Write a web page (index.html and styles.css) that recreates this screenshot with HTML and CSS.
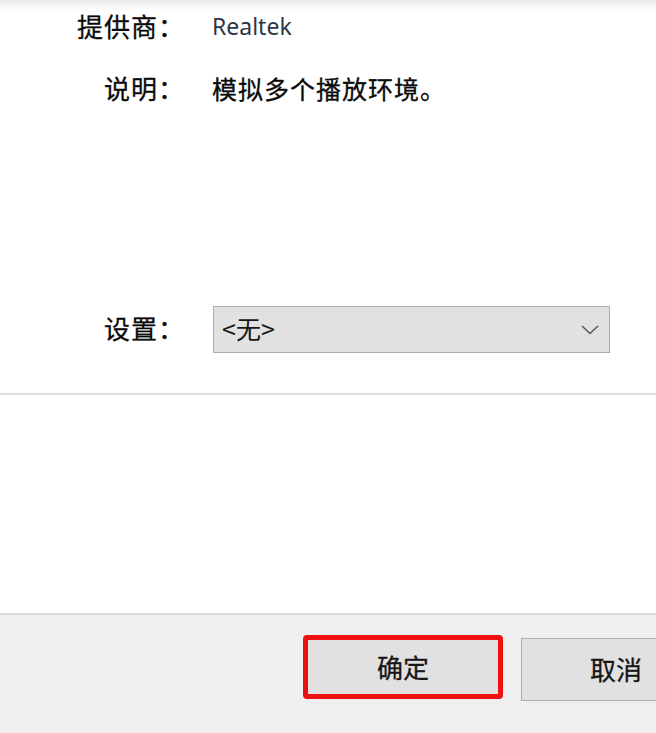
FILE: index.html
```html
<!DOCTYPE html>
<html lang="zh-CN">
<head>
<meta charset="utf-8">
<title>属性</title>
<link rel="stylesheet" href="styles.css">
</head>
<body>
<div class="page">
  <section class="info">
    <div class="row row-provider">
      <span class="label">提供商：</span>
      <span class="value latin">Realtek</span>
    </div>
    <div class="row row-desc">
      <span class="label">说明：</span>
      <span class="value">模拟多个播放环境。</span>
    </div>
    <div class="row row-settings">
      <span class="label">设置：</span>
      <div class="select">
        <span class="select-text">&lt;无&gt;</span>
        <svg class="chevron" width="18" height="10" viewBox="0 0 18 10"><polyline points="1,1 9,8.5 17,1" fill="none" stroke="#5a5a5a" stroke-width="1.6"/></svg>
      </div>
    </div>
  </section>
  <div class="separator"></div>
  <div class="blank"></div>
  <footer class="footer">
    <button class="btn btn-ok">确定</button>
    <button class="btn btn-cancel">取消</button>
  </footer>
  <div class="taskbar-line"></div>
</div>
</body>
</html>
```
FILE: styles.css
```css
html, body {
  margin: 0;
  padding: 0;
  background: #ffffff;
}
.page {
  width: 656px;
  height: 733px;
  overflow: hidden;
  display: flex;
  flex-direction: column;
  font-family: "Noto Sans CJK SC", "Noto Sans", sans-serif;
  color: #0a0a0a;
  background: linear-gradient(#e9e9e9 0px, #f8f8f8 6px, #ffffff 12px);
}
.info {
  display: flex;
  flex-direction: column;
  padding-top: 6px;
}
.row {
  display: flex;
  align-items: center;
  gap: 27px;
}
.label {
  width: 185px;
  text-align: right;
  font-size: 26px;
  line-height: 40px;
  flex: none;
  letter-spacing: 1px;
  -webkit-text-stroke: 0.3px #0a0a0a;
}
.value {
  font-size: 25px;
  line-height: 40px;
  letter-spacing: 1px;
  -webkit-text-stroke: 0.3px #0a0a0a;
}
.latin {
  font-family: "Noto Sans", sans-serif;
  font-size: 23px;
  letter-spacing: 0;
  color: #2e3646;
  -webkit-text-stroke: 0;
}
.row-desc {
  margin-top: 22px;
}
.row-settings {
  margin-top: 198px;
  gap: 28px;
}
.row-settings .label {
  padding-bottom: 4px;
}
.select {
  width: 397px;
  height: 47px;
  box-sizing: border-box;
  border: 1px solid #adadad;
  background: #e1e1e1;
  display: flex;
  align-items: center;
  justify-content: space-between;
  padding: 0 10px 4px 8px;
}
.select-text {
  font-size: 25px;
  line-height: 40px;
  color: #161616;
}
.chevron {
  display: block;
  margin-top: 4px;
}
.separator {
  margin-top: 40px;
  height: 2px;
  background: #dedede;
  flex: none;
}
.blank {
  height: 218px;
  flex: none;
}
.footer {
  height: 109px;
  flex: none;
  border-top: 2px solid #dcdcdc;
  background: #efefef;
  display: flex;
  align-items: flex-start;
  padding-top: 20px;
  box-sizing: content-box;
}
.btn {
  font-family: "Noto Sans CJK SC", sans-serif;
  font-size: 26px;
  line-height: 1;
  color: #161616;
  background: #e1e1e1;
  box-sizing: border-box;
  padding: 0;
  flex: none;
  -webkit-text-stroke: 0.3px #161616;
}
.btn-ok {
  margin-left: 303px;
  width: 200px;
  height: 64px;
  border: 5px solid #ee1111;
  border-radius: 4px;
  padding-bottom: 1px;
}
.btn-cancel {
  margin-left: 18px;
  margin-top: 3px;
  width: 160px;
  height: 63px;
  border: 1px solid #adadad;
  text-align: left;
  padding-left: 68px;
  padding-bottom: 1px;
}
.taskbar-line {
  height: 3px;
  background: #3a4a2a;
  flex: none;
}
```
